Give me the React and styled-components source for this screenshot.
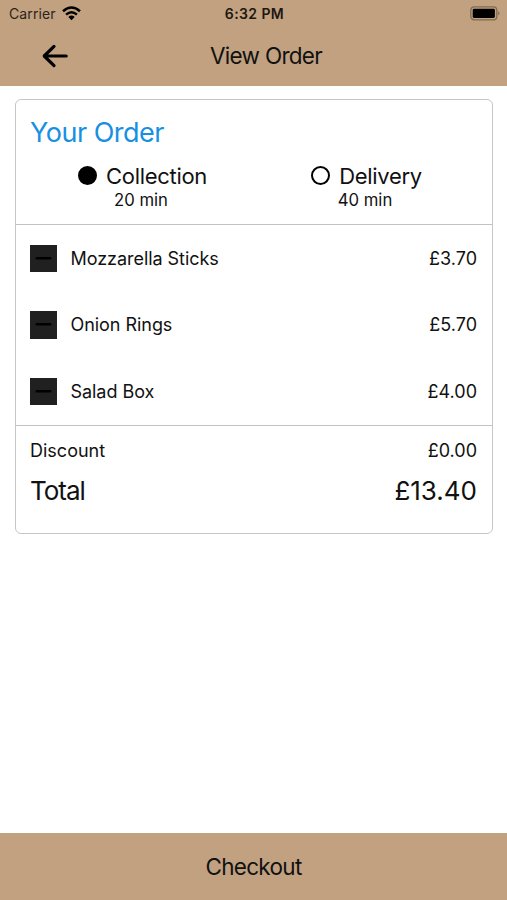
import React, { useState } from 'react';
import styled, { createGlobalStyle } from 'styled-components';

const GlobalStyle = createGlobalStyle`
  * {
    box-sizing: border-box;
  }
  body {
    margin: 0;
    background: #fff;
    color: #111;
    font-family: Inter, "Liberation Sans", sans-serif;
  }
  button {
    padding: 0;
    border: 0;
    background: none;
    color: inherit;
    font: inherit;
  }
`;

const Screen = styled.div`
  display: flex;
  flex-direction: column;
  height: 900px;
`;

const TopBar = styled.header`
  height: 86px;
  background: #c1a180;
`;

const StatusBar = styled.div`
  display: grid;
  grid-template-columns: 1fr auto 1fr;
  align-items: center;
  height: 27px;
  padding: 0 7px 0 9px;
`;

const Carrier = styled.div`
  display: flex;
  align-items: center;
  gap: 6px;
  color: #2b241c;
  font-size: 14px;
  letter-spacing: 0.1px;
`;

const Clock = styled.div`
  color: #1c1712;
  font-size: 14px;
  font-weight: 600;
  letter-spacing: 0.4px;
`;

const BatteryIcon = styled.svg`
  justify-self: end;
`;

const NavBar = styled.div`
  display: grid;
  grid-template-columns: 1fr auto 1fr;
  align-items: center;
  height: 58px;
  padding: 0 16px 0 41px;
`;

const BackButton = styled.button`
  display: flex;
  justify-self: start;
`;

const NavTitle = styled.h1`
  margin: 0;
  padding-bottom: 2px;
  font-size: 22.5px;
  font-weight: 400;
  letter-spacing: -0.7px;
`;

const Main = styled.main`
  flex: 1;
  padding: 13px 14px 0 15px;
`;

const Card = styled.section`
  height: 435px;
  border: 1.5px solid #c6c6c6;
  border-radius: 6px;
`;

const CardHeader = styled.div`
  height: 125px;
  padding: 15px 14px 0;
  border-bottom: 1px solid #c2c2c2;
`;

const CardTitle = styled.h2`
  margin: 0;
  color: #1890e2;
  font-size: 27px;
  font-weight: 400;
  letter-spacing: -0.5px;
  line-height: 36px;
`;

const Options = styled.div`
  display: grid;
  grid-template-columns: 1fr 1fr;
  margin-top: 11px;
`;

const Option = styled.button`
  display: flex;
  flex-direction: column;
  align-items: center;
`;

const OptionName = styled.span`
  display: flex;
  align-items: center;
  gap: 9px;
  padding-left: 1px;
  font-size: 22px;
  letter-spacing: -0.3px;
  line-height: 28px;
`;

const Radio = styled.span`
  width: 19px;
  height: 19px;
  margin-bottom: 1px;
  border: 2px solid #000;
  border-radius: 50%;
  background: ${(props) => (props.$checked ? '#000' : 'transparent')};
`;

const OptionTime = styled.span`
  padding-right: 2px;
  font-size: 16.7px;
  line-height: 20px;
`;

const Items = styled.ul`
  display: grid;
  grid-template-rows: repeat(3, 1fr);
  height: 201px;
  margin: 0;
  padding: 0 15px 0 13.5px;
  border-bottom: 1px solid #c2c2c2;
  list-style: none;
`;

const Item = styled.li`
  display: flex;
  align-items: center;
  gap: 14px;
  font-size: 18px;
`;

const RemoveButton = styled.button`
  display: flex;
  align-items: center;
  justify-content: center;
  width: 27.5px;
  height: 27.5px;
  background: #202020;
`;

const ItemName = styled.span`
  flex: 1;
  margin-left: -0.5px;
  letter-spacing: -0.05px;
`;

const Summary = styled.div`
  padding: 10px 15px 0 14px;
`;

const SummaryRow = styled.div`
  display: flex;
  justify-content: space-between;
  font-size: 18px;
  line-height: 30px;
`;

const TotalRow = styled(SummaryRow)`
  margin-top: 7px;
  font-size: 26px;
  line-height: 36px;
`;

const TotalLabel = styled.span`
  letter-spacing: -1px;
`;

const CheckoutButton = styled.button`
  height: 67px;
  background: #c1a180;
  font-size: 22.5px;
  letter-spacing: -0.7px;
`;

const items = [
  { name: 'Mozzarella Sticks', price: '£3.70' },
  { name: 'Onion Rings', price: '£5.70' },
  { name: 'Salad Box', price: '£4.00' },
];

function App() {
  const [method, setMethod] = useState('collection');

  return (
    <Screen>
      <GlobalStyle />
      <TopBar>
        <StatusBar>
          <Carrier>
            Carrier
            <svg width="19" height="15" viewBox="0 0 19 15" fill="none" stroke="#000" strokeWidth="2.5">
              <path d="M1 5.2Q9.5-2.2 18 5.2" />
              <path d="M4.1 8.6Q9.5 3.9 14.9 8.6" />
              <path d="M6.3 11Q9.5 8.2 12.7 11L9.5 14.2Z" fill="#000" stroke="none" />
            </svg>
          </Carrier>
          <Clock>6:32 PM</Clock>
          <BatteryIcon width="30" height="15" viewBox="0 0 30 15">
            <rect x="0.8" y="0.8" width="26" height="13" rx="3.4" fill="none" stroke="#806a53" strokeWidth="1.3" />
            <rect x="2.7" y="2.7" width="22.2" height="9.2" rx="1.4" fill="#000" />
            <path d="M28.2 5.2Q30.8 7.3 28.2 9.4Z" fill="#806a53" />
          </BatteryIcon>
        </StatusBar>
        <NavBar>
          <BackButton aria-label="Back">
            <svg width="28" height="24" viewBox="0 0 28 24" fill="none" stroke="#000" strokeWidth="3.2" strokeLinecap="round" strokeLinejoin="round">
              <path d="M13 2.4L3.2 12L13 21.6M3.8 12H25.2" />
            </svg>
          </BackButton>
          <NavTitle>View Order</NavTitle>
        </NavBar>
      </TopBar>
      <Main>
        <Card>
          <CardHeader>
            <CardTitle>Your Order</CardTitle>
            <Options>
              <Option onClick={() => setMethod('collection')}>
                <OptionName>
                  <Radio $checked={method === 'collection'} />
                  Collection
                </OptionName>
                <OptionTime>20 min</OptionTime>
              </Option>
              <Option onClick={() => setMethod('delivery')}>
                <OptionName>
                  <Radio $checked={method === 'delivery'} />
                  Delivery
                </OptionName>
                <OptionTime>40 min</OptionTime>
              </Option>
            </Options>
          </CardHeader>
          <Items>
            {items.map((item) => (
              <Item key={item.name}>
                <RemoveButton aria-label="Remove">
                  <svg width="17" height="3" viewBox="0 0 17 3">
                    <rect x="0.5" width="16" height="2.6" rx="1.2" fill="#000" />
                  </svg>
                </RemoveButton>
                <ItemName>{item.name}</ItemName>
                <span>{item.price}</span>
              </Item>
            ))}
          </Items>
          <Summary>
            <SummaryRow>
              <span>Discount</span>
              <span>£0.00</span>
            </SummaryRow>
            <TotalRow>
              <TotalLabel>Total</TotalLabel>
              <span>£13.40</span>
            </TotalRow>
          </Summary>
        </Card>
      </Main>
      <CheckoutButton>Checkout</CheckoutButton>
    </Screen>
  );
}

export default App;
